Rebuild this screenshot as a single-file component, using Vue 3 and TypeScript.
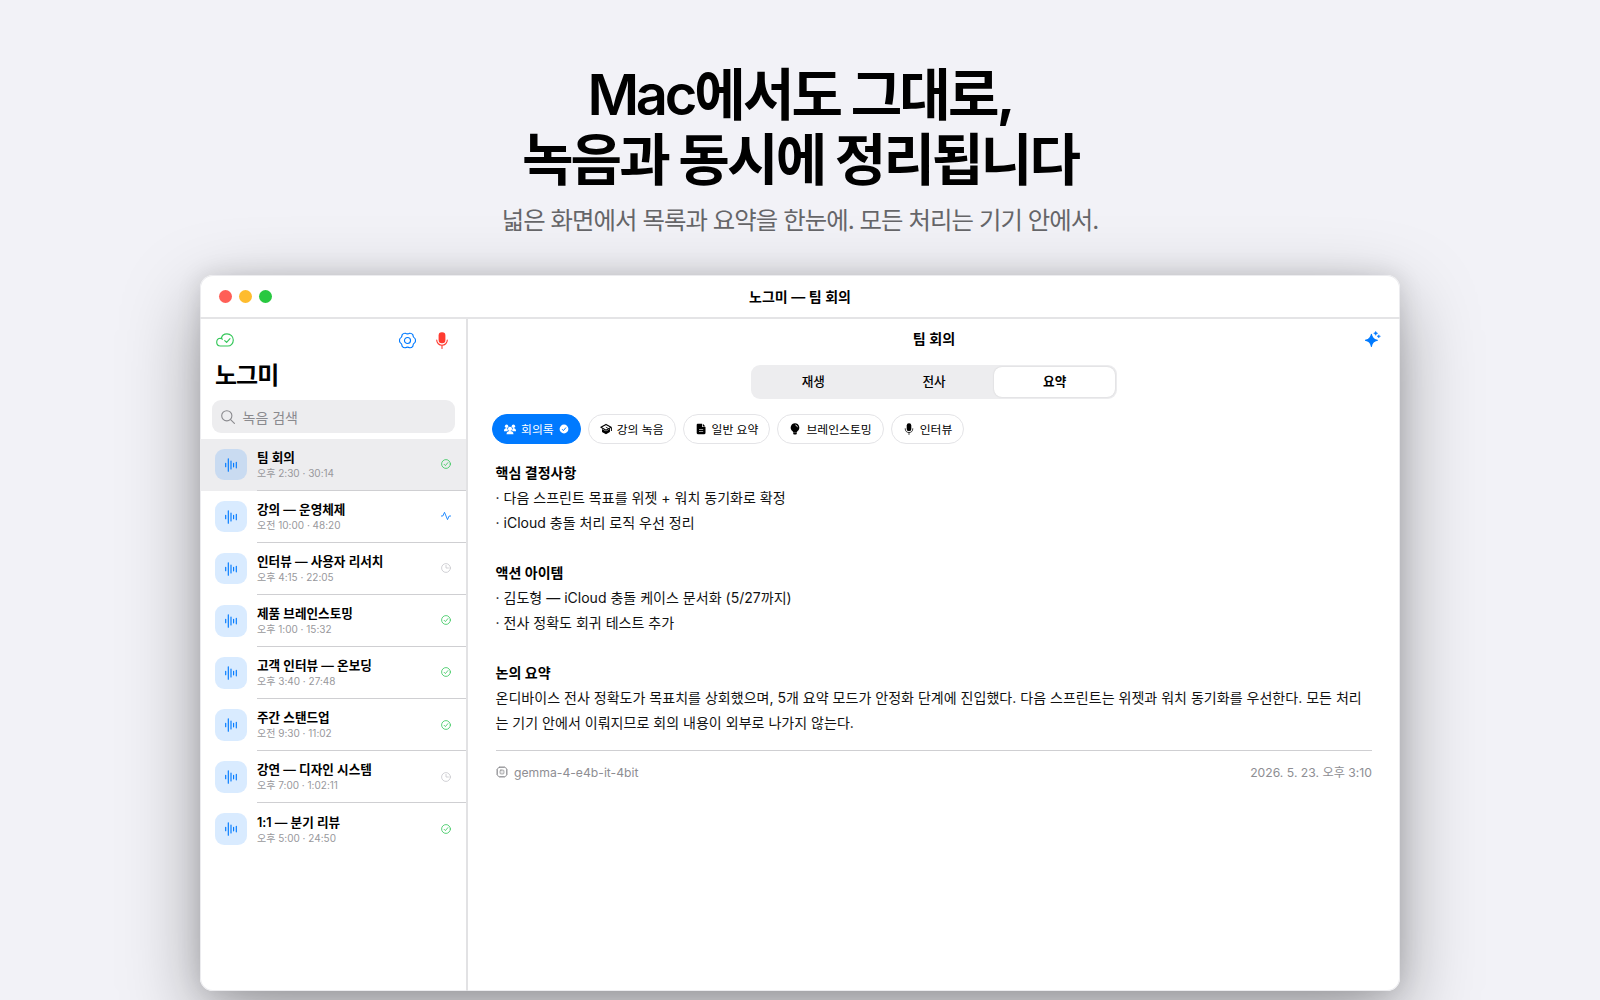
<script setup lang="ts">
type Status = 'done' | 'live' | 'wait'
interface Recording { title: string; meta: string; status: Status }

const recordings: Recording[] = [
  { title: '팀 회의', meta: '오후 2:30 · 30:14', status: 'done' },
  { title: '강의 — 운영체제', meta: '오전 10:00 · 48:20', status: 'live' },
  { title: '인터뷰 — 사용자 리서치', meta: '오후 4:15 · 22:05', status: 'wait' },
  { title: '제품 브레인스토밍', meta: '오후 1:00 · 15:32', status: 'done' },
  { title: '고객 인터뷰 — 온보딩', meta: '오후 3:40 · 27:48', status: 'done' },
  { title: '주간 스탠드업', meta: '오전 9:30 · 11:02', status: 'done' },
  { title: '강연 — 디자인 시스템', meta: '오후 7:00 · 1:02:11', status: 'wait' },
  { title: '1:1 — 분기 리뷰', meta: '오후 5:00 · 24:50', status: 'done' },
]
const tabs: string[] = ['재생', '전사', '요약']
const modes = [
  { icon: 'people', label: '회의록' },
  { icon: 'cap', label: '강의 녹음' },
  { icon: 'doc', label: '일반 요약' },
  { icon: 'bulb', label: '브레인스토밍' },
  { icon: 'mic', label: '인터뷰' },
]
</script>

<template>
  <main class="stage">
    <h1 class="headline"><span class="latin">Mac</span>에서도 그대로,<br />녹음과 동시에 정리됩니다</h1>
    <p class="tagline">넓은 화면에서 목록과 요약을 한눈에. 모든 처리는 기기 안에서.</p>

    <section class="window">
      <header class="titlebar">
        <div class="lights"><i class="red" /><i class="amber" /><i class="green" /></div>
        <span class="window-title">노그미 — 팀 회의</span>
      </header>

      <div class="panes">
        <aside class="sidebar">
          <div class="tools">
            <svg class="cloud" viewBox="0 0 18 14" fill="none" stroke="#34c759" stroke-width="1.15" stroke-linecap="round" stroke-linejoin="round">
              <path d="M4.4 13C2.2 13 .7 11.4 .7 9.3S2.3 5.4 4.4 5.3C5.2 5.3 5.9 5.6 6.4 6.2M5.4 5.3C5.8 2.8 8 .8 11 .8 14.500 .8 17.300 3.500 17.300 7 17.300 10.400 14.800 13 11.800 13H4.400" />
              <path d="m8.700 7.600 1.900 1.700 3.400-3.700" />
            </svg>
            <svg class="gear" viewBox="0 0 18 18" fill="none" stroke="#007aff" stroke-width="1.2" stroke-linejoin="round">
              <path d="M11.3 1.3Q13.3 1.1 14.6 2.8 14.7 5.6 17 7 17.900 9 17 11 14.700 12.400 14.600 15.200 13.300 16.900 11.300 16.700 9 15.300 6.700 16.700 4.700 16.900 3.400 15.200 3.300 12.400 1 11 .1 9 1 7 3.300 5.600 3.400 2.800 4.700 1.100 6.700 1.300 9 2.700 11.300 1.300Z" />
              <circle cx="9" cy="9" r="3.2" />
            </svg>
            <svg class="mic" viewBox="0 0 12 17" fill="none" stroke="#ff3b30" stroke-width="1.1" stroke-linecap="round">
              <rect x="2.6" y=".3" width="6.8" height="11" rx="3.2" fill="#ff3b30" stroke="none" />
              <path d="M.7 8a5.3 5.3 0 0 0 10.6 0M6 13.4v3" />
            </svg>
          </div>
          <h2 class="app-name">노그미</h2>
          <div class="search">
            <svg viewBox="0 0 14 14" fill="none" stroke="#8a8a8e" stroke-width="1.1" stroke-linecap="round">
              <circle cx="5.8" cy="5.8" r="5.1" /><path d="m9.6 9.6 3.8 3.8" />
            </svg>
            <span>녹음 검색</span>
          </div>
          <ul class="list">
            <li v-for="(item, index) in recordings" :key="item.title" :class="{ selected: index === 0 }">
              <span class="tile">
                <svg viewBox="0 0 12 14" stroke="#007aff" stroke-width="1.15" stroke-linecap="round">
                  <path d="M.7 5.3v3.4M3.3.8v12.4M6 3v8M8.6 5.2v3.6M11.3 4.2v5.6" />
                </svg>
              </span>
              <div class="row">
                <div class="row-text">
                  <strong>{{ item.title }}</strong>
                  <small>{{ item.meta }}</small>
                </div>
                <svg v-if="item.status === 'done'" class="status" viewBox="0 0 10 10" fill="none" stroke="#34c759" stroke-width=".8" stroke-linecap="round" stroke-linejoin="round">
                  <circle cx="5" cy="5" r="4.4" /><path d="m3.1 5.3 1.3 1.3L6.9 3.6" />
                </svg>
                <svg v-else-if="item.status === 'live'" class="status" viewBox="0 0 10 10" fill="none" stroke="#007aff" stroke-width=".85" stroke-linecap="round" stroke-linejoin="round">
                  <path d="M.3 5H1.8L3.5 1.3 6.5 8.6 8.1 5H9.7" />
                </svg>
                <svg v-else class="status" viewBox="0 0 10 10" fill="none" stroke="#c7c7cc" stroke-width=".8" stroke-linecap="round" stroke-linejoin="round">
                  <circle cx="5" cy="5" r="4.4" /><path d="M5 2.4V5h2.4" />
                </svg>
              </div>
            </li>
          </ul>
        </aside>

        <article class="detail">
          <div class="detail-head">
            <h3>팀 회의</h3>
            <svg class="sparkle" viewBox="0 0 16 16" fill="#007aff">
              <path d="M6.4 3.3Q7.2 8.4 12.4 9.3 7.2 10.2 6.4 15.5 5.5 10.2.3 9.3 5.5 8.4 6.4 3.3Z" stroke="#007aff" stroke-width="1.1" stroke-linejoin="round" />
              <path d="M10.7.3Q11 2 12.8 2.3 11 2.6 10.7 4.4 10.4 2.6 8.6 2.3 10.4 2 10.7.3ZM13.8 3.7Q14 5 15.5 5.3 14 5.6 13.8 7 13.5 5.6 12 5.3 13.5 5 13.8 3.7Z" stroke="#007aff" stroke-width=".4" />
            </svg>
          </div>

          <nav class="tabs">
            <button v-for="(tab, index) in tabs" :key="tab" :class="{ active: index === 2 }">{{ tab }}</button>
          </nav>

          <div class="modes">
            <span v-for="(mode, index) in modes" :key="mode.icon" class="chip" :class="{ on: index === 0 }">
              <svg v-if="mode.icon === 'people'" viewBox="0 0 12 12" fill="currentColor">
                <circle cx="2.6" cy="3.2" r="1.7" /><circle cx="9.4" cy="3.2" r="1.7" />
                <path d="M0 7.8C.1 6 1.2 5 3 5L4.1 7.3 3 8.2H0ZM12 7.8C11.9 6 10.8 5 9 5L7.9 7.3 9 8.2h3Z" />
                <circle cx="6" cy="5.9" r="2.1" /><path d="M2.5 11.3c0-2.4 1.5-3.4 3.5-3.4s3.5 1 3.5 3.4Z" />
              </svg>
              <svg v-else-if="mode.icon === 'cap'" viewBox="0 0 12 12" fill="currentColor">
                <path d="M2 6l4 2.3L9.9 6.1v3L6 11.3 2 9ZM11 4.4h.9V8H11Z" />
                <path d="M6 1.4.9 4.3 6 7.2l5.1-2.9Z" fill="none" stroke="currentColor" stroke-width="1.15" stroke-linejoin="round" />
                <path d="M5.8 4.1 9.6 6.2v2" fill="none" stroke="currentColor" stroke-width=".8" />
              </svg>
              <svg v-else-if="mode.icon === 'doc'" viewBox="0 0 12 12">
                <path d="M3 .8h4.1v3.3h3.4v6a1.1 1.1 0 0 1-1.1 1.1H2.8a1.1 1.1 0 0 1-1.1-1.1V1.9A1.1 1.1 0 0 1 3 .8Z" fill="currentColor" />
                <path d="M7.8.8 10.4 3.4H7.8Z" fill="currentColor" /><path d="M4 6.5h4.2M4 8.5h4.2" stroke="#fff" stroke-width=".6" />
              </svg>
              <svg v-else-if="mode.icon === 'bulb'" viewBox="0 0 12 12" fill="currentColor">
                <path d="M6 .2a4.4 4.4 0 0 0-2.4 8q.4.3.5 1h3.8q.1-.7.5-1A4.4 4.4 0 0 0 6 .2ZM4.2 9.6h3.6v.9a1 1 0 0 1-1 1H5.2a1 1 0 0 1-1-1Z" />
                <path d="M6.7 2a2.2 2.2 0 0 1 1.7 1.8" stroke="#fff" stroke-width=".8" stroke-linecap="round" fill="none" />
              </svg>
              <svg v-else viewBox="0 0 12 12" fill="none" stroke="currentColor" stroke-width=".75" stroke-linecap="round">
                <rect x="3.7" y=".3" width="4.6" height="7.8" rx="2.2" fill="currentColor" stroke="none" />
                <path d="M2.2 5.7a3.8 3.8 0 0 0 7.6 0M6 9.6v1.9" />
              </svg>
              <b>{{ mode.label }}</b>
              <svg v-if="index === 0" class="tick" viewBox="0 0 10 10">
                <circle cx="5" cy="5" r="4.4" fill="#fff" /><path d="m3.1 5.2 1.3 1.4L7 3.5" fill="none" stroke="#007aff" stroke-width="1" />
              </svg>
            </span>
          </div>

          <div class="summary">
            <h4>핵심 결정사항</h4>
            <p>· 다음 스프린트 목표를 위젯 + 워치 동기화로 확정</p>
            <p>· iCloud 충돌 처리 로직 우선 정리</p>
            <h4>액션 아이템</h4>
            <p>· 김도형 — iCloud 충돌 케이스 문서화 (5/27까지)</p>
            <p>· 전사 정확도 회귀 테스트 추가</p>
            <h4>논의 요약</h4>
            <p>온디바이스 전사 정확도가 목표치를 상회했으며, 5개 요약 모드가 안정화 단계에 진입했다. 다음 스프린트는 위젯과 워치 동기화를 우선한다. 모든 처리<br />는 기기 안에서 이뤄지므로 회의 내용이 외부로 나가지 않는다.</p>
          </div>

          <footer class="foot">
            <svg viewBox="0 0 12 12" fill="none" stroke="#8a8a8e" stroke-width=".8" stroke-linecap="round">
              <rect x="1.4" y="1.4" width="9.2" height="9.2" rx="2" />
              <rect x="4.1" y="4.1" width="3.8" height="3.8" rx=".8" /><path d="M5.9 6h.2M4 .4v1M6 .4v1M8 .4v1M4 10.6v1M6 10.6v1M8 10.6v1M.4 4h1M.4 6h1M.4 8h1M10.6 4h1M10.6 6h1M10.6 8h1" />
            </svg>
            <span class="model">gemma-4-e4b-it-4bit</span>
            <time>2026. 5. 23. 오후 3:10</time>
          </footer>
        </article>
      </div>
    </section>
  </main>
</template>

<style>
body { margin: 0; background: #f2f2f7; }
</style>

<style scoped>
* { box-sizing: border-box; margin: 0; padding: 0; }
.stage {
  width: 1600px; height: 1000px; overflow: hidden; background: #f2f2f7; color: #000;
  display: flex; flex-direction: column; align-items: center; padding-top: 63px;
  font-family: Inter, "Noto Sans CJK KR", sans-serif;
}
.headline { font-size: 56px; line-height: 64.5px; font-weight: 700; letter-spacing: -2.85px; text-align: center; white-space: nowrap; }
.headline .latin { font-weight: 600; letter-spacing: -3.2px; }
.tagline { margin-top: 10px; font-size: 24.4px; line-height: 36px; color: #666669; letter-spacing: -.95px; white-space: nowrap; }
.window {
  flex: none; width: 1200px; height: 716px; margin-top: 37px; border-radius: 13px; background: #fff; overflow: hidden;
  display: flex; flex-direction: column;
  box-shadow: inset 0 0 0 1px #ececef, 0 27px 78px rgba(0, 0, 0, .35), 0 0 24px rgba(0, 0, 0, .12);
}
.titlebar { height: 44px; flex: none; display: grid; grid-template-columns: 1fr auto 1fr; align-items: center; border-bottom: 2px solid #e4e4e6; }
.lights { display: flex; gap: 7px; padding: 0 0 0 19px; }
.lights i { width: 13px; height: 13px; border-radius: 50%; }
.red { background: #ff5f57; } .amber { background: #febc2e; } .green { background: #28c840; }
.window-title { font-size: 14px; font-weight: 600; padding-bottom: 1px; }
.panes { flex: 1; display: flex; min-height: 0; }
.sidebar { width: 268px; flex: none; border-right: 2px solid #e2e2e4; }
.tools { height: 41px; display: flex; align-items: center; padding: 1px 18px 0 15.5px; }
.cloud { width: 18px; height: 14px; margin-right: auto; }
.gear { width: 17px; height: 17px; margin-right: 20px; }
.mic { width: 12px; height: 17px; }
.app-name { font-size: 24px; line-height: 32px; font-weight: 700; padding-left: 15px; letter-spacing: -1px; }
.search { height: 33px; margin: 8px 11px 0 12px; border-radius: 9px; background: #ededef; display: flex; align-items: center; gap: 7.5px; padding-left: 9px; color: #8a8a8e; font-size: 14px; }
.search svg { width: 14px; height: 14px; }
.list { list-style: none; padding-top: 5.5px; }
.list li { height: 52.1px; display: flex; align-items: center; padding-left: 15px; gap: 10.5px; }
.list .selected { background: #ededef; }
.tile { width: 31.5px; height: 31.5px; border-radius: 9px; background: rgba(0, 122, 255, .15); display: grid; place-items: center; }
.tile svg { width: 12px; height: 14px; }
.row { flex: 1; align-self: stretch; display: flex; align-items: center; justify-content: space-between; padding-right: 15px; border-bottom: 1px solid #cfcfd2; }
.list li:last-child .row { border-bottom: 0; }
.row-text { display: flex; flex-direction: column; }
.row-text strong { font-size: 12.6px; line-height: 17px; font-weight: 600; }
.row-text small { font-size: 10px; line-height: 14px; color: #98989c; }
.status { width: 10px; height: 10px; }
.detail { flex: 1; min-width: 0; display: flex; flex-direction: column; }
.detail-head { height: 39px; flex: none; display: grid; place-items: center; }
.detail-head h3 { grid-area: 1 / 1; font-size: 14.1px; font-weight: 600; padding-bottom: 1px; }
.sparkle { grid-area: 1 / 1; justify-self: end; margin-right: 19px; width: 16px; height: 16px; }
.tabs { width: 366px; height: 34px; margin: 7px auto 0; flex: none; padding: 2px; border-radius: 9px; background: #ededef; display: grid; grid-template-columns: repeat(3, 1fr); }
.tabs button { border: 0; border-radius: 8px; background: none; padding-bottom: 3px; font: 500 12.6px Inter, "Noto Sans CJK KR", sans-serif; color: #000; }
.tabs .active { background: #fff; font-weight: 600; box-shadow: 0 0 2px rgba(0, 0, 0, .14); }
.modes { display: flex; gap: 7px; margin: 15px 0 0 24px; }
.chip { height: 30px; border: 1px solid #e4e4e7; border-radius: 15px; display: flex; align-items: center; gap: 5px; padding: 0 11px; font-size: 11.83px; }
.chip b { font-weight: 400; white-space: nowrap; padding-bottom: 2px; }
.chip svg { width: 12px; height: 12px; }
.chip.on { background: #007aff; border-color: #007aff; color: #fff; }
.chip .tick { width: 10px; height: 10px; }
.summary { margin: 15.5px 0 0 27.5px; font-size: 14.04px; line-height: 25px; white-space: nowrap; color: #111; }
.summary h4 { font-size: 14px; font-weight: 600; color: #000; }
.summary p + h4 { margin-top: 25px; }
.foot { margin: 15px 28px 0; border-top: 1px solid #cfcfd2; display: flex; align-items: center; height: 44px; font-size: 12.2px; color: #8e8e93; }
.foot svg { width: 12px; height: 12px; margin-right: 6px; }
.foot time { margin-left: auto; }
</style>
